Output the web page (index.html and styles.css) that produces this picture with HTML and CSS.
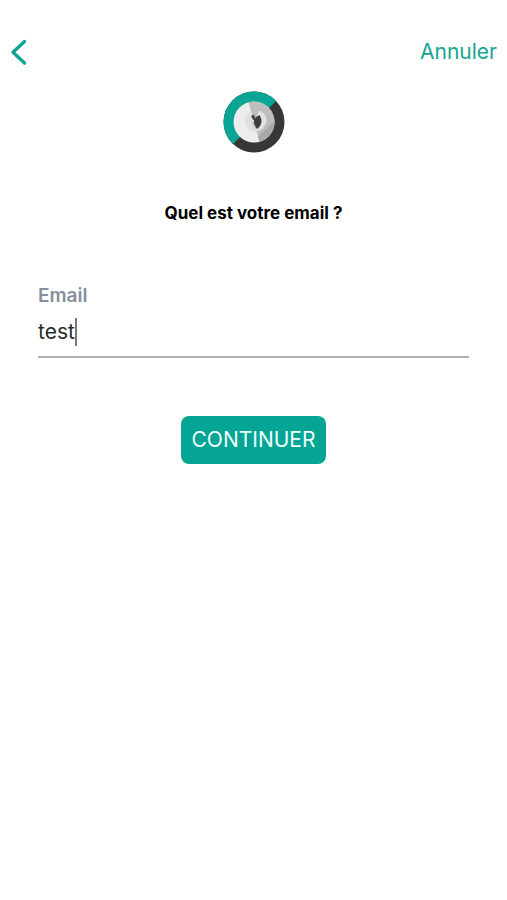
FILE: index.html
```html
<!DOCTYPE html>
<html lang="fr">
<head>
<meta charset="utf-8">
<meta name="viewport" content="width=device-width, initial-scale=1">
<title>Email</title>
<link rel="stylesheet" href="styles.css">
</head>
<body>
<header class="topbar">
  <button class="back" type="button" aria-label="Retour">
    <svg width="18" height="28" viewBox="0 0 18 28" fill="none" stroke="currentColor" stroke-width="3.4" stroke-linecap="round" stroke-linejoin="round"><path d="M14.500 3.500 3 14.200l11.500 10.800"/></svg>
  </button>
  <a class="cancel" href="#">Annuler</a>
</header>
<main class="content">
  <svg class="logo" viewBox="0 0 62 62" aria-hidden="true">
    <circle cx="31" cy="31" r="30.500" fill="#363838"/>
    <path d="M10 53A30.500 30.500 0 0 1 9.500 9.400 30.500 30.500 0 0 1 53 10Z" fill="#0aa594"/>
    <circle cx="31" cy="31" r="20.500" fill="#ededed"/>
    <path d="M25.500 11.300A20.500 20.500 0 0 1 36.500 50.800Z" fill="#bdbdbd"/>
    <path d="M35 45.500 51.500 30A20.500 20.500 0 0 1 36.500 50.800Z" fill="#a8a8a8"/>
    <path d="M36 19.500C43 22 45 29 42 34 40 38 37 40 33.500 40.500L31 31Z" fill="#e2e2e2"/>
    <path d="M28.500 20C22 23 20 31 24 36.500 26 39 29 40.500 33 41L30 27Z" fill="#e0e0e0"/>
    <path d="M36.500 24C31.500 26.500 30 30 31.500 34L34 38C38.500 35 40 30 36.500 24Z" fill="#3d3f3f"/>
    <path d="M28 25 31 23.500l1.500 5-2 1Z" fill="#414343"/>
    <path d="m28 30 3.500 3 2 6Z" fill="#a9a9a9"/>
  </svg>
  <h1 class="title">Quel est votre email ?</h1>
  <form class="form">
    <label class="label" for="email">Email</label>
    <div class="field">
      <input class="input" id="email" type="text" value="test">
      <span class="caret"></span>
    </div>
    <button class="submit" type="button">CONTINUER</button>
  </form>
</main>
</body>
</html>
```
FILE: styles.css
```css
* {
  box-sizing: border-box;
}

body {
  margin: 0;
  background: #fff;
  color: #000;
  font-family: Inter, "Liberation Sans", sans-serif;
}

button {
  border: 0;
  padding: 0;
  font: inherit;
  cursor: pointer;
}

.topbar {
  display: flex;
  align-items: center;
  justify-content: space-between;
  padding: 38px 10px 0;
}

.back {
  display: flex;
  background: none;
  color: #10a592;
}

.cancel {
  color: #16a592;
  font-size: 21px;
  line-height: 28px;
  text-decoration: none;
}

.content {
  display: flex;
  flex-direction: column;
  align-items: center;
  padding: 25px 38px 0;
}

.logo {
  width: 62px;
  height: 62px;
}

.title {
  margin: 48px 0 0;
  font-size: 17px;
  line-height: 24px;
  font-weight: 700;
}

.form {
  display: flex;
  flex-direction: column;
  align-self: stretch;
  margin-top: 59px;
}

.label {
  color: #858f9b;
  font-size: 19px;
  line-height: 24px;
  font-weight: 600;
}

.field {
  position: relative;
  border-bottom: 2px solid #b0b0b0;
}

.input {
  display: block;
  width: 100%;
  height: 48px;
  border: 0;
  padding: 0 0 2px;
  outline: 0;
  background: none;
  color: #2c2c2c;
  font: inherit;
  font-size: 21px;
}

.caret {
  position: absolute;
  top: 10px;
  left: 37px;
  width: 2px;
  height: 28px;
  background: #777;
}

.submit {
  align-self: center;
  margin-top: 58px;
  padding: 10px;
  border-radius: 8px;
  background: #05a595;
  color: #effffc;
  font-size: 21px;
  line-height: 28px;
}
```
